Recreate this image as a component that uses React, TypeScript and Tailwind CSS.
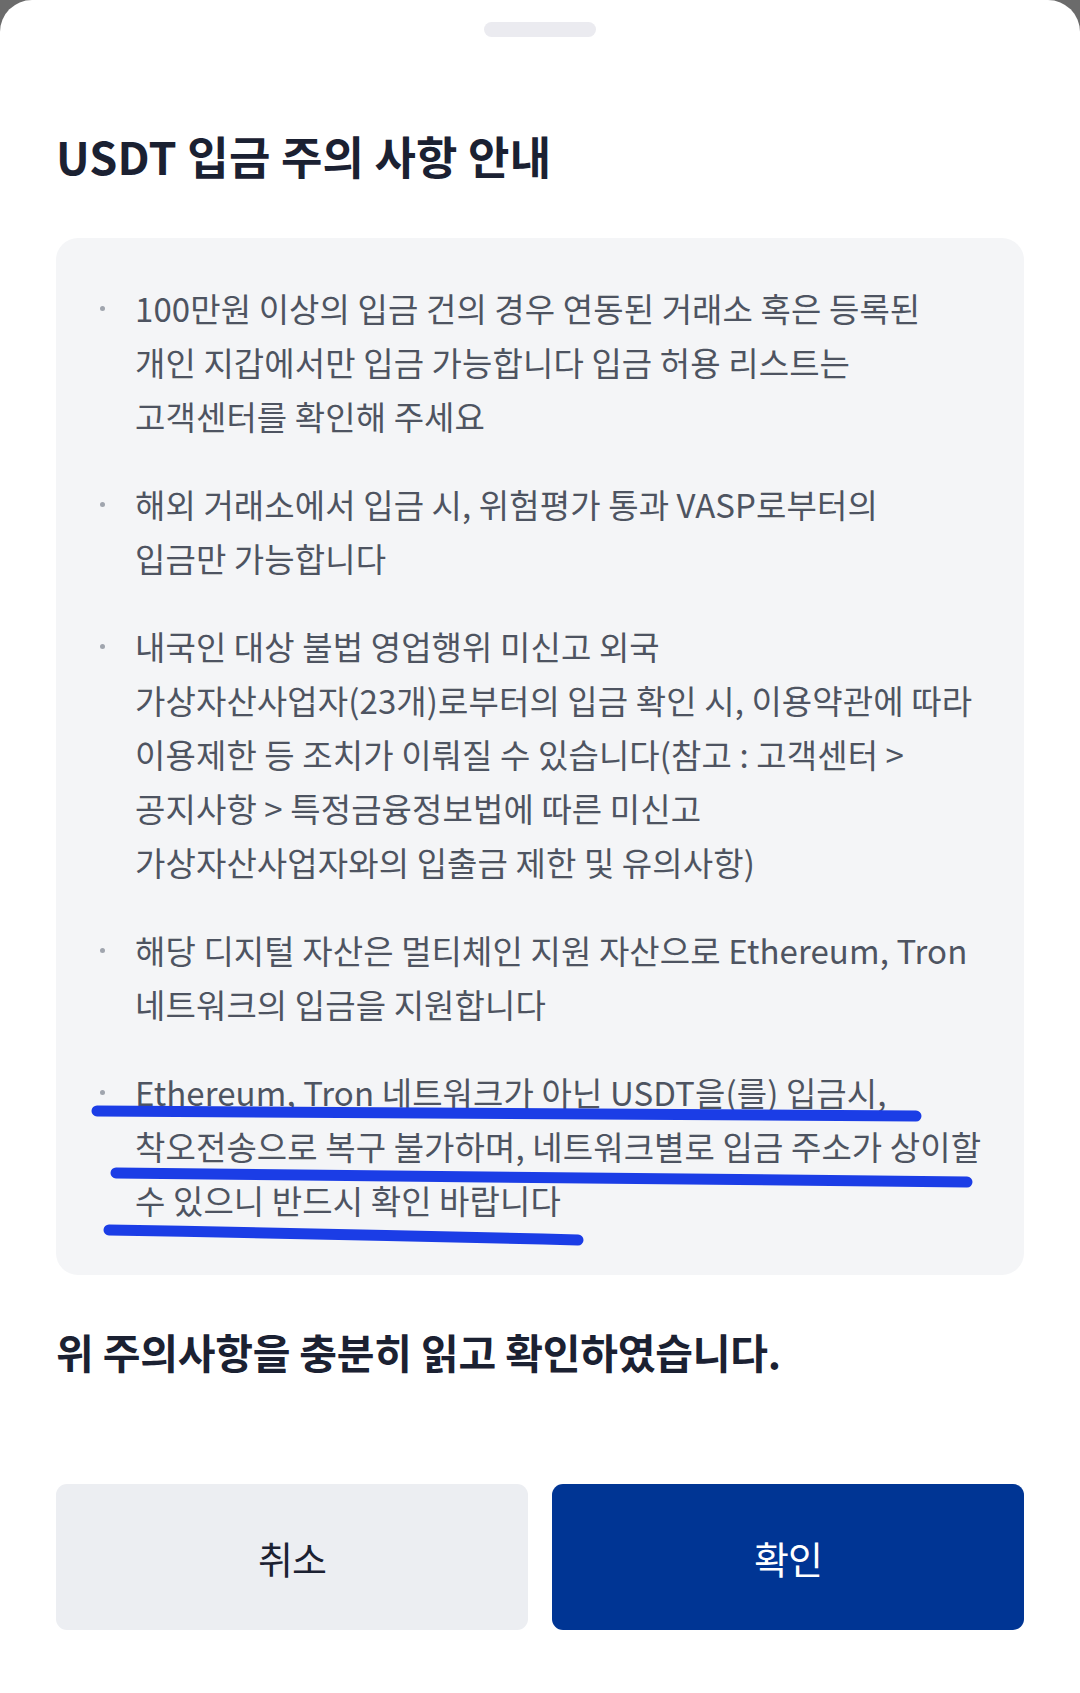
import React from "react";

const notices: string[][] = [
  [
    "100만원 이상의 입금 건의 경우 연동된 거래소 혹은 등록된",
    "개인 지갑에서만 입금 가능합니다 입금 허용 리스트는",
    "고객센터를 확인해 주세요",
  ],
  ["해외 거래소에서 입금 시, 위험평가 통과 VASP로부터의", "입금만 가능합니다"],
  [
    "내국인 대상 불법 영업행위 미신고 외국",
    "가상자산사업자(23개)로부터의 입금 확인 시, 이용약관에 따라",
    "이용제한 등 조치가 이뤄질 수 있습니다(참고 : 고객센터 >",
    "공지사항 > 특정금융정보법에 따른 미신고",
    "가상자산사업자와의 입출금 제한 및 유의사항)",
  ],
  ["해당 디지털 자산은 멀티체인 지원 자산으로 Ethereum, Tron", "네트워크의 입금을 지원합니다"],
  [
    "Ethereum, Tron 네트워크가 아닌 USDT을(를) 입금시,",
    "착오전송으로 복구 불가하며, 네트워크별로 입금 주소가 상이할",
    "수 있으니 반드시 확인 바랍니다",
  ],
];

const font = { fontFamily: '"Noto Sans CJK KR", "Noto Sans", sans-serif' };

export default function App() {
  return (
    <div className="min-h-[1693px] bg-[#6b6b6b]" style={font}>
      <div className="min-h-[1693px] rounded-t-[32px] bg-white px-[56px]">
        <div className="flex justify-center pt-[22px]">
          <div className="h-[15px] w-[112px] rounded-full bg-[#ebebf0]" />
        </div>

        <h1 className="mt-[91px] text-[45px] font-semibold leading-[56px] tracking-[0.2px] text-[#1b2132]">
          USDT 입금 주의 사항 안내
        </h1>

        <div className="relative mt-[54px] rounded-[22px] bg-[#f4f5f7] pb-[48px] pl-[44px] pr-[20px] pt-[43px]">
          <ul className="flex flex-col gap-[34px]">
            {notices.map((lines, i) => (
              <li key={i} className="flex">
                <div className="flex h-[54px] w-[35px] shrink-0 items-center">
                  <span className="h-[5px] w-[5px] rounded-full bg-[#a0a5ae]" />
                </div>
                <p className="text-[33px] leading-[54px] tracking-[0.1px] text-[#4e5461] whitespace-nowrap">
                  {lines.map((l, j) => (
                    <span key={j} className="block">
                      {l}
                    </span>
                  ))}
                </p>
              </li>
            ))}
          </ul>

          {/* hand-drawn marker underlines */}
          <svg
            className="pointer-events-none absolute left-0 top-0"
            width="968"
            height="1036"
            viewBox="0 0 968 1036"
            fill="none"
          >
            <g stroke="#1b3de6" strokeWidth="11" strokeLinecap="round">
              <path d="M41 873 Q450 876 860 878" />
              <path d="M60 935 Q480 938 911 944" />
              <path d="M53 992 Q290 996 522 1002" />
            </g>
          </svg>
        </div>

        <p className="mt-[51px] text-[41px] font-bold leading-[50px] tracking-[-0.2px] text-[#1b2132]">
          위 주의사항을 충분히 읽고 확인하였습니다.
        </p>

        <div className="mt-[108px] grid grid-cols-2 gap-[24px]">
          <button className="h-[146px] rounded-[11px] bg-[#eceef2] text-[38px] tracking-[-1px] text-[#1b2132]">
            취소
          </button>
          <button className="h-[146px] rounded-[11px] bg-[#003594] text-[38px] tracking-[-1px] text-white">
            확인
          </button>
        </div>
      </div>
    </div>
  );
}
